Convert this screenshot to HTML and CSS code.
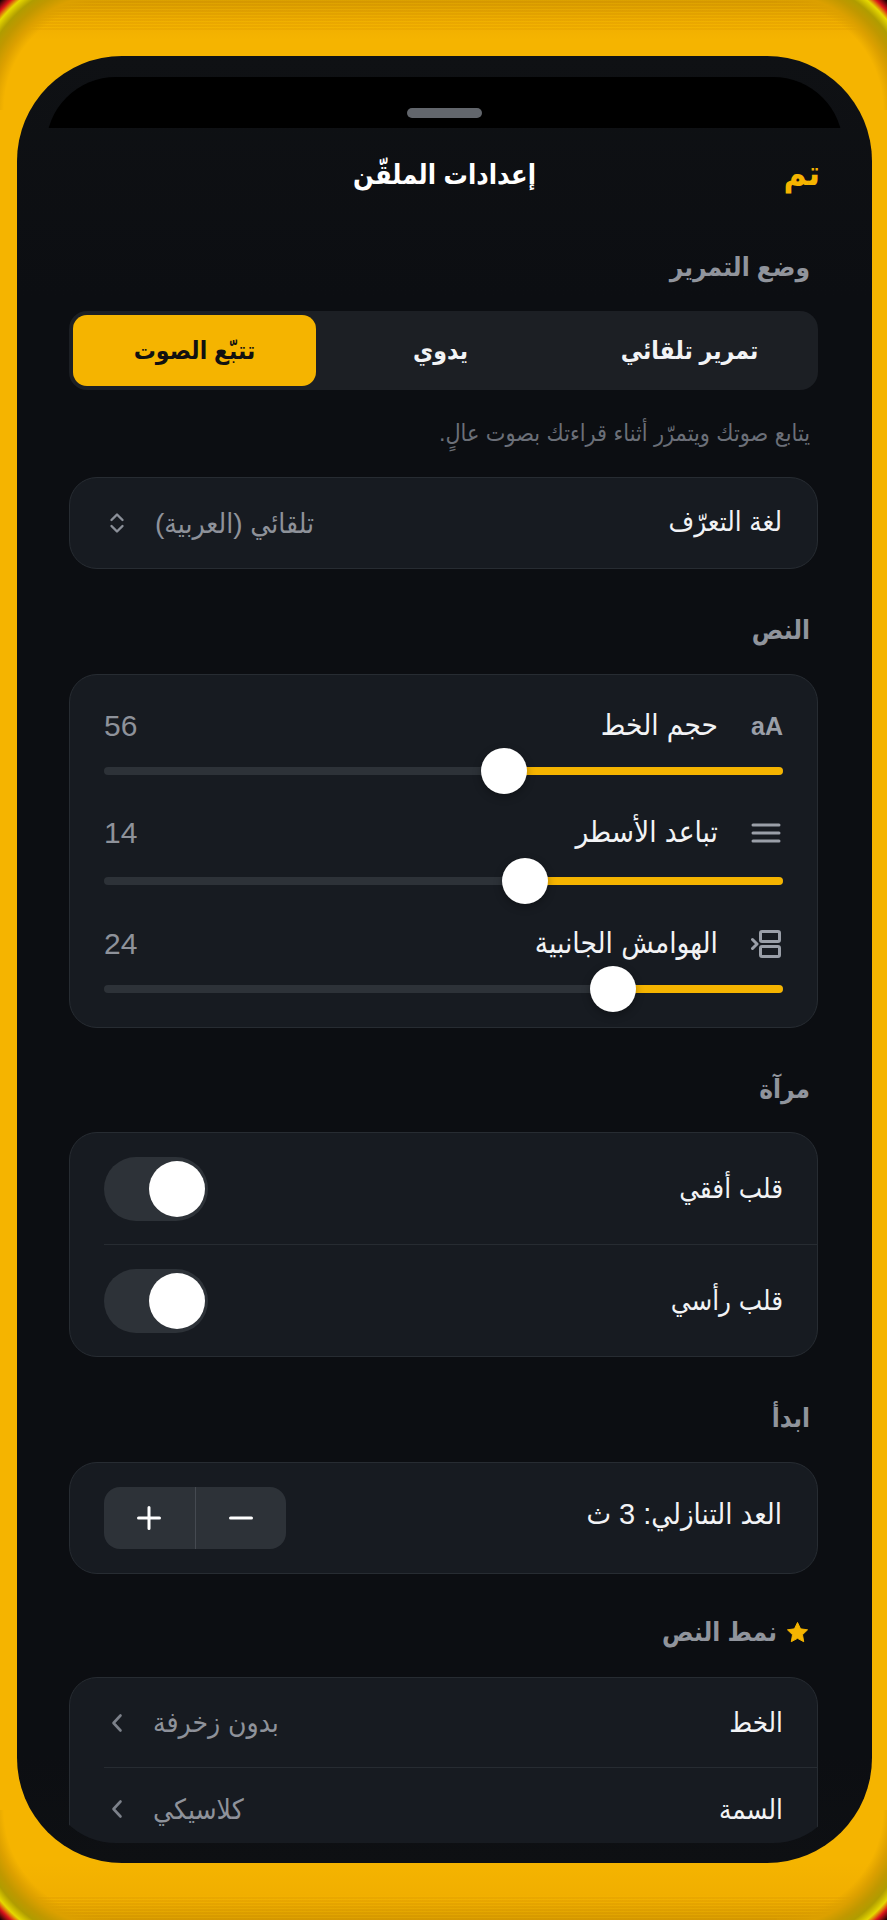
FILE: index.html
```html
<!DOCTYPE html>
<html lang="ar" dir="rtl">
<head>
<meta charset="UTF-8">
<title>إعدادات الملقّن</title>
<link rel="stylesheet" href="styles.css">
</head>
<body>
<div class="phone">
	<div class="screen">
		<div class="notch"><span class="grabber"></span></div>

		<header class="topbar">
			<span class="done">تم</span>
			<h1 class="title">إعدادات الملقّن</h1>
		</header>

		<main class="content">
			<h2 class="label label-first">وضع التمرير</h2>
			<div class="segments">
				<div class="segment">تمرير تلقائي</div>
				<div class="segment">يدوي</div>
				<div class="segment segment-on">تتبّع الصوت</div>
			</div>
			<p class="hint">يتابع صوتك ويتمرّر أثناء قراءتك بصوت عالٍ.</p>

			<div class="card lang">
				<span class="row-name">لغة التعرّف</span>
				<span class="row-value">تلقائي (العربية)</span>
				<svg class="updown" viewBox="0 0 16 22" width="16" height="22"><path d="M2.5 8 8 2.5 13.5 8M2.5 14 8 19.5 13.5 14" fill="none" stroke="#8b9099" stroke-width="2.4" stroke-linecap="round" stroke-linejoin="round"/></svg>
			</div>

			<h2 class="label">النص</h2>
			<div class="card sliders">
				<div class="slider">
					<div class="slider-head">
						<span class="slider-icon icon-aa">aA</span>
						<span class="row-name">حجم الخط</span>
						<span class="num">56</span>
					</div>
					<div class="track"><div class="fill" style="width:41.1%"><span class="thumb"></span></div></div>
				</div>
				<div class="slider slider-mid">
					<div class="slider-head">
						<span class="slider-icon">
							<svg viewBox="0 0 30 22" width="30" height="22"><path d="M2 3h26M2 11h26M2 19h26" stroke="#9a9fa8" stroke-width="3" stroke-linecap="round"/></svg>
						</span>
						<span class="row-name">تباعد الأسطر</span>
						<span class="num">14</span>
					</div>
					<div class="track"><div class="fill" style="width:38%"><span class="thumb"></span></div></div>
				</div>
				<div class="slider">
					<div class="slider-head">
						<span class="slider-icon">
							<svg viewBox="0 0 30 28" width="30" height="28"><g fill="none" stroke="#9a9fa8" stroke-width="3" stroke-linejoin="round" stroke-linecap="round"><rect x="9.500" y="1.500" width="19" height="10" rx="1.500"/><rect x="9.500" y="16.500" width="19" height="10" rx="1.500"/><path d="M1.500 9.500 6 14 1.500 18.500"/></g></svg>
						</span>
						<span class="row-name">الهوامش الجانبية</span>
						<span class="num">24</span>
					</div>
					<div class="track"><div class="fill" style="width:25%"><span class="thumb"></span></div></div>
				</div>
			</div>

			<h2 class="label label-tight">مرآة</h2>
			<div class="card">
				<div class="row row-switch">
					<span class="row-name">قلب أفقي</span>
					<span class="switch"><span class="knob"></span></span>
				</div>
				<div class="row row-switch row-last">
					<span class="row-name">قلب رأسي</span>
					<span class="switch"><span class="knob"></span></span>
				</div>
			</div>

			<h2 class="label">ابدأ</h2>
			<div class="card countdown">
				<span class="row-name">العد التنازلي: 3 ث</span>
				<div class="stepper">
					<span class="step">
						<svg viewBox="0 0 24 6" width="24" height="6"><path d="M1.500 3h21" stroke="#fff" stroke-width="3" stroke-linecap="round"/></svg>
					</span>
					<span class="step step-plus">
						<svg viewBox="0 0 24 24" width="24" height="24"><path d="M12 1.500v21M1.500 12h21" stroke="#fff" stroke-width="3" stroke-linecap="round"/></svg>
					</span>
				</div>
			</div>

			<h2 class="label label-star">
				<svg viewBox="0 0 24 24" width="23" height="23"><path d="M12 1.500l3.200 6.700 7.300 1-5.300 5.100 1.300 7.300L12 18.100l-6.500 3.500 1.300-7.300L1.500 9.200l7.300-1z" fill="#f5b400" stroke="#f5b400" stroke-linejoin="round"/></svg>
				<span>نمط النص</span>
			</h2>
			<div class="card card-cut">
				<div class="row row-link">
					<span class="row-name">الخط</span>
					<span class="row-value">بدون زخرفة</span>
					<svg class="chev" viewBox="0 0 12 20" width="12" height="20"><path d="M9.500 2.500 2.500 10l7 7.500" fill="none" stroke="#7c818a" stroke-width="2.600" stroke-linecap="round" stroke-linejoin="round"/></svg>
				</div>
				<div class="row row-link row-last">
					<span class="row-name">السمة</span>
					<span class="row-value">كلاسيكي</span>
					<svg class="chev" viewBox="0 0 12 20" width="12" height="20"><path d="M9.500 2.500 2.500 10l7 7.500" fill="none" stroke="#7c818a" stroke-width="2.600" stroke-linecap="round" stroke-linejoin="round"/></svg>
				</div>
			</div>
		</main>
	</div>
</div>
</body>
</html>
```
FILE: styles.css
```css
* {box-sizing:border-box;}
html, body {margin:0; height:1920px; overflow:hidden;}
body {
	--corner:rgba(245,180,0,0) 106px, #dca000 116px, #c09800 126px, #b09c00 134px, #e6d800 142px, #d8141a 148px, #000 156px;
	--streaks:repeating-linear-gradient(rgba(255,205,0,.09) 0 1px, rgba(170,100,0,.09) 1px 3px);
	padding:56px 15px 57px 17px;
	font-family:"Liberation Sans", "DejaVu Sans Condensed", "DejaVu Sans", sans-serif;
	font-stretch:condensed;
	color:#f2f3f5;
	background-color:#f5b400;
	background-image:
		radial-gradient(circle at 100% 100%, var(--corner)),
		radial-gradient(circle at 0 100%, var(--corner)),
		radial-gradient(circle at 100% 0, var(--corner)),
		radial-gradient(circle at 0 0, var(--corner)),
		var(--streaks),
		var(--streaks),
		linear-gradient(#d89c00, #f0ae00 22px, #f5b400 40px),
		linear-gradient(#f5b400, #f0ae00 36px, #d89c00);
	background-size:110px 110px, 110px 110px, 110px 110px, 110px 110px, 100% 30px, 100% 24px, 100% 56px, 100% 57px;
	background-position:0 0, 100% 0, 0 100%, 100% 100%, 0 0, 0 100%, 0 0, 0 100%;
	background-repeat:no-repeat;
}

.phone {
	height:1807px;
	padding:21px 29px 20px;
	background:linear-gradient(#0f1114, #0c0e12 240px, #0c0e12 1700px, #0e1013);
	border-radius:105px;
}
.screen {
	height:100%;
	overflow:hidden;
	border-radius:70px;
}

.notch {
	height:51px;
	padding-top:31px;
	background:#000;
}
.grabber {
	display:block;
	width:75px;
	height:10px;
	margin:0 auto;
	border-radius:5px;
	background:#62666c;
}

.topbar {
	position:relative;
	height:96px;
	padding:0 23px;
	display:flex;
	align-items:center;
}
.done {margin-bottom:6px; font-size:35px; font-weight:bold; color:#f5b400;}
.title {
	position:absolute;
	left:0;
	right:0;
	top:0;
	line-height:94px;
	margin:0;
	text-align:center;
	font-size:27px;
	font-weight:bold;
	color:#fff;
}

.content {padding:0 25px 0 23px;}

.label {
	margin:46px 0 29px;
	padding-right:8px;
	line-height:30px;
	font-size:26px;
	font-weight:bold;
	color:#90949c;
}
.label-first {margin-top:28px;}
.label-tight {margin-bottom:28px;}
.label-star {display:flex; align-items:center; gap:9px; margin:43px 0 30px; padding-right:9px;}

.segments {
	display:flex;
	height:79px;
	padding:4px;
	border-radius:18px;
	background:#1c1f24;
}
.segment {
	flex:1;
	display:flex;
	align-items:center;
	justify-content:center;
	border-radius:14px;
	font-size:24.500px;
	font-weight:bold;
	color:#f2f3f5;
}
.segment-on {flex:none; width:243px; background:#f5b400; color:#111;}

.hint {
	margin:28px 0 29px;
	padding-right:8px;
	line-height:30px;
	font-size:23.200px;
	color:#6b6f78;
}

.card {
	border:1px solid #272c32;
	border-radius:28px;
	background:#171b21;
}
.row-name {font-size:27.500px; color:#f2f3f5;}
.row-value {font-size:28px; color:#8e929a;}

.lang {
	height:92px;
	padding:0 35px 0 34px;
	display:flex;
	align-items:center;
}
.lang .row-name {margin-bottom:4px;}
.lang .row-value {margin-right:auto; margin-left:30px;}
.updown {flex:none; margin-left:5px;}

.sliders {padding:34px 34px 34px;}
.slider {margin-bottom:43px;}
.slider:last-child {margin-bottom:0;}
.slider-mid {margin-bottom:42px;}
.slider-head {display:flex; align-items:center; height:34px; margin-bottom:24px;}
.slider-mid .slider-head {margin-top:-2px; margin-bottom:27px;}
.slider-head .row-name {margin-bottom:2px; font-size:29.500px;}
.slider-icon {
	display:flex;
	justify-content:flex-end;
	width:32px;
	margin-left:33px;
	color:#9a9fa8;
}
.icon-aa {font-size:25px; font-weight:bold;}
.num {margin-right:auto; font-size:30px; color:#8e929a;}

.track {
	height:8px;
	border-radius:4px;
	background:#2d3238;
}
.fill {
	position:relative;
	height:8px;
	border-radius:4px;
	background:#f5b400;
}
.thumb {
	position:absolute;
	left:-23px;
	top:-19px;
	width:46px;
	height:46px;
	border-radius:50%;
	background:#fff;
	box-shadow:0 3px 8px rgba(0,0,0,.3);
}

.row {
	display:flex;
	align-items:center;
	margin-left:34px;
	padding-right:34px;
	border-bottom:1px solid #272c32;
}
.row-last {border-bottom:none;}
.row-switch {height:112px;}
.row-switch.row-last {height:111px;}
.row-link {height:90px;}
.row-link.row-last {height:82px;}
.row-link .row-value {margin-right:auto; margin-left:30px;}

.switch {
	display:flex;
	align-items:center;
	width:104px;
	height:64px;
	margin-right:auto;
	padding:0 3px;
	border-radius:32px;
	background:#2d3238;
}
.knob {
	width:56px;
	height:56px;
	border-radius:50%;
	background:#fff;
}

.countdown {
	height:112px;
	padding:0 35px 0 34px;
	display:flex;
	align-items:center;
}
.countdown .row-name {margin-bottom:8px; font-size:29px;}
.stepper {
	display:flex;
	width:182px;
	height:62px;
	margin-right:auto;
	border-radius:16px;
	background:#2d3238;
}
.step {
	flex:1;
	display:flex;
	align-items:center;
	justify-content:center;
}
.step-plus {border-right:1px solid #454a51;}

.card-cut {height:200px; border-radius:28px;}
.chev {flex:none; margin-left:7px;}
```
